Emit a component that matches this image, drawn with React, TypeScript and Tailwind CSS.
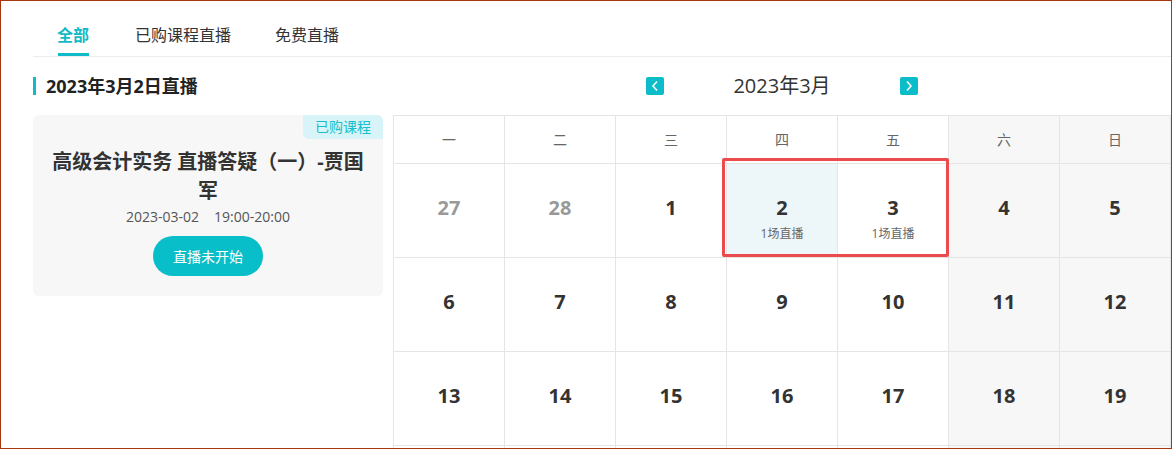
import React from "react";

const tabs = ["全部", "已购课程直播", "免费直播"];
const weekdays = ["一", "二", "三", "四", "五", "六", "日"];

type Day = { n?: number; prev?: boolean; live?: number };

const weeks: Day[][] = [
  [{ n: 27, prev: true }, { n: 28, prev: true }, { n: 1 }, { n: 2, live: 1 }, { n: 3, live: 1 }, { n: 4 }, { n: 5 }],
  [{ n: 6 }, { n: 7 }, { n: 8 }, { n: 9 }, { n: 10 }, { n: 11 }, { n: 12 }],
  [{ n: 13 }, { n: 14 }, { n: 15 }, { n: 16 }, { n: 17 }, { n: 18 }, { n: 19 }],
  // next week only peeks in at the bottom edge
  [{}, {}, {}, {}, {}, {}, {}],
];

function Chevron({ dir }: { dir: "left" | "right" }) {
  return (
    <button className="flex h-[18px] w-[18px] items-center justify-center rounded-[2px] bg-[#0bbdc9]">
      <svg width="10" height="12" viewBox="0 0 10 12" fill="none">
        <polyline
          points={dir === "left" ? "7,1.5 3,6 7,10.5" : "3,1.5 7,6 3,10.5"}
          stroke="white"
          strokeWidth="1.6"
        />
      </svg>
    </button>
  );
}

export default function App() {
  return (
    <div
      className="box-border h-[449px] w-[1172px] overflow-hidden border border-[#a8360f] bg-white pl-[32px] text-[#333]"
      style={{ fontFamily: '"Open Sans", "Noto Sans CJK SC", sans-serif' }}
    >
      {/* Tabs */}
      <div className="box-border flex h-[56px] border-b border-[#ececec] pl-[24px]">
        {tabs.map((tab, i) => (
          <div
            key={tab}
            className={`relative flex h-full items-center pt-[12px] text-[16px] ${
              i === 0 ? "mr-[46px] font-semibold text-[#10bac7]" : "mr-[44px] text-[#333]"
            }`}
          >
            {tab}
            {i === 0 && (
              <span className="absolute bottom-0 left-[1px] right-0 h-[3px] bg-[#10bac7]" />
            )}
          </div>
        ))}
      </div>

      <div className="flex">
        {/* Left */}
        <div className="w-[350px]">
          <div className="flex h-[58px] items-center">
            <span className="h-[18px] w-[3px] bg-[#10bac7]" />
            <h2 className="ml-[10px] text-[18px] font-bold text-[#222]">2023年3月2日直播</h2>
          </div>
          <div className="relative rounded-[6px] bg-[#f7f7f7] px-[16px] pt-[32px] pb-[20px] text-center">
            <span className="absolute right-0 top-0 rounded-bl-[6px] rounded-tr-[6px] bg-[#d8f4f8] px-[12px] text-[14px] leading-[24px] text-[#16bfcb]">
              已购课程
            </span>
            <h3 className="text-[20px] font-bold leading-[29px] text-[#333]">
              高级会计实务 直播答疑（一）-贾国军
            </h3>
            <p className="mt-[2px] text-[14px] leading-[20px] text-[#555]">
              2023-03-02<span className="ml-[15px]">19:00-20:00</span>
            </p>
            <button className="mt-[9px] h-[40px] w-[110px] rounded-full bg-[#08bec9] text-[14px] text-white">
              直播未开始
            </button>
          </div>
        </div>

        {/* Calendar */}
        <div className="ml-[10px] w-[778px]">
          <div className="flex h-[58px] items-center justify-center gap-[69px]">
            <Chevron dir="left" />
            <span className="text-[20px] text-[#333]">2023年3月</span>
            <Chevron dir="right" />
          </div>
          <div className="relative">
            <div className="grid grid-cols-7 border-l border-t border-[#e5e5e5]">
              {weekdays.map((w, i) => (
                <div
                  key={w}
                  className={`flex h-[48px] items-center justify-center border-b border-r border-[#e5e5e5] text-[14px] text-[#666] ${
                    i >= 5 ? "bg-[#f7f7f7]" : ""
                  }`}
                >
                  {w}
                </div>
              ))}
              {weeks.flat().map((d, i) => {
                const col = i % 7;
                const bg = d.n === 2 && !d.prev ? "bg-[#edf6f9]" : col >= 5 ? "bg-[#f7f7f7]" : "";
                return (
                  <div
                    key={i}
                    className={`flex h-[94px] flex-col items-center border-b border-r border-[#e5e5e5] pt-[30px] ${bg}`}
                  >
                    {d.n !== undefined && (
                      <span
                        className={`text-[20px] font-bold leading-[28px] ${
                          d.prev ? "text-[#999]" : "text-[#333]"
                        }`}
                      >
                        {d.n}
                      </span>
                    )}
                    {d.live && (
                      <span className="mt-[4px] text-[12px] leading-[16px] text-[#666]">
                        {d.live}场直播
                      </span>
                    )}
                  </div>
                );
              })}
            </div>
            {/* highlight box */}
            <div className="pointer-events-none absolute left-[329px] top-[43px] h-[99px] w-[227px] rounded-[2px] border-[3px] border-[#ec4b4d]" />
          </div>
        </div>
      </div>
    </div>
  );
}
